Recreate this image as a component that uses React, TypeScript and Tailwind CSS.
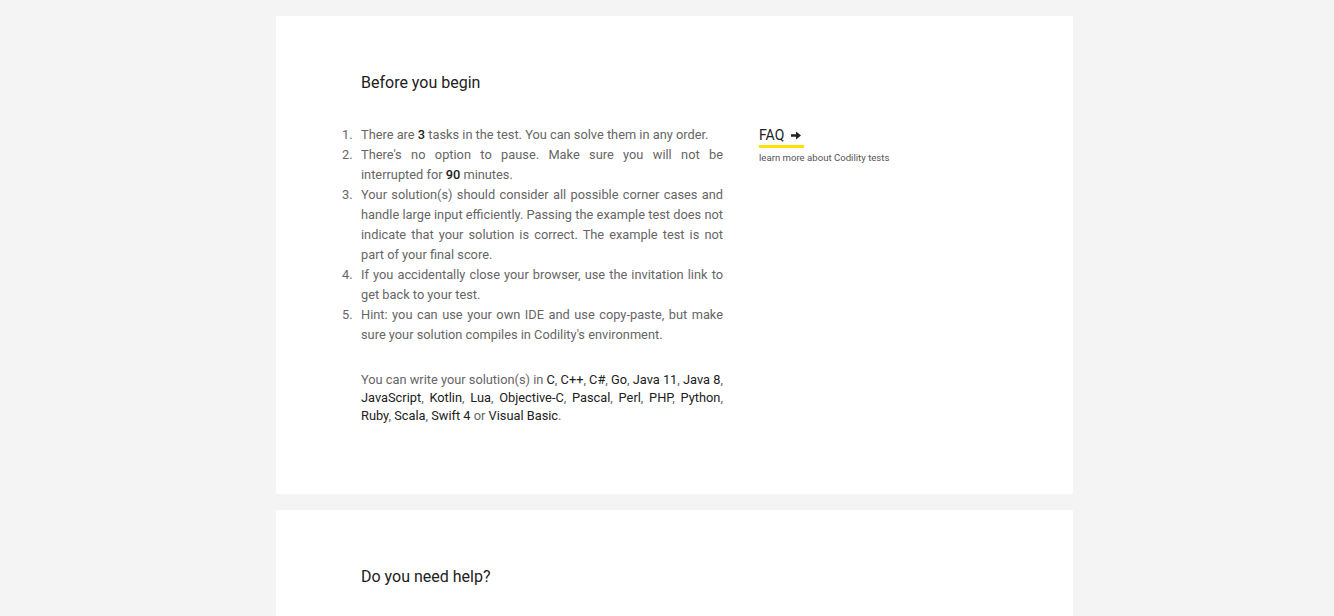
import { ReactNode } from "react";

function B({ children }: { children: ReactNode }) {
  return <span className="font-medium text-[#212121]">{children}</span>;
}

const steps: ReactNode[] = [
  <>There are <B>3</B> tasks in the test. You can solve them in any order.</>,
  <>There's no option to pause. Make sure you will not be interrupted for <B>90</B> minutes.</>,
  <>Your solution(s) should consider all possible corner cases and handle large input efficiently. Passing the example test does not indicate that your solution is correct. The example test is not part of your final score.</>,
  <>If you accidentally close your browser, use the invitation link to get back to your test.</>,
  <>Hint: you can use your own IDE and use copy-paste, but make sure your solution compiles in Codility's environment.</>,
];

const langs = [
  "C", "C++", "C#", "Go", "Java 11", "Java 8", "JavaScript", "Kotlin", "Lua",
  "Objective-C", "Pascal", "Perl", "PHP", "Python", "Ruby", "Scala", "Swift 4",
];

export default function App() {
  return (
    <div className="min-h-screen bg-[#f4f4f4] pt-4 pl-[15px] flex flex-col items-center gap-4 font-['Roboto',sans-serif]">
      <section className="w-[797px] bg-white rounded-[2px] pt-[55px] pb-[69px] pl-[85px]">
        <h2 className="text-base leading-6 text-[#212121]">Before you begin</h2>

        <div className="mt-[30px] flex">
          <div className="w-[362px]">
            <ol className="text-[12.8px] leading-5 text-[#666]">
              {steps.map((s, i) => (
                <li key={i} className="grid grid-cols-[19px_1fr] -ml-[19px]">
                  <span>{i + 1}.</span>
                  <span className="text-justify">{s}</span>
                </li>
              ))}
            </ol>

            <p className="mt-[26px] text-[12.8px] leading-[18px] text-[#666] text-justify">
              You can write your solution(s) in{" "}
              {langs.map((l, i) => (
                <span key={l}>
                  <span className="text-[#212121]">{l}</span>
                  {i < langs.length - 1 ? ", " : " "}
                </span>
              ))}
              or <span className="text-[#212121]">Visual Basic</span>.
            </p>
          </div>

          <div className="ml-9 -mt-[2px]">
            <a className="inline-flex items-center gap-[7px] border-b-[3px] border-[#ffe000] pr-[3px] text-sm leading-5 text-[#212121]">
              FAQ
              <svg width="10" height="9" viewBox="0 0 10 9" fill="#212121">
                <path d="M0 3.2h5V0.4L10 4.5 5 8.6V5.8H0z" />
              </svg>
            </a>
            <p className="mt-[4px] text-[9.6px] leading-3 text-[#555]">learn more about Codility tests</p>
          </div>
        </div>
      </section>

      <section className="w-[797px] bg-white rounded-[2px] pt-[55px] pb-[70px] pl-[85px]">
        <h2 className="text-base leading-6 text-[#212121]">Do you need help?</h2>
      </section>
    </div>
  );
}
